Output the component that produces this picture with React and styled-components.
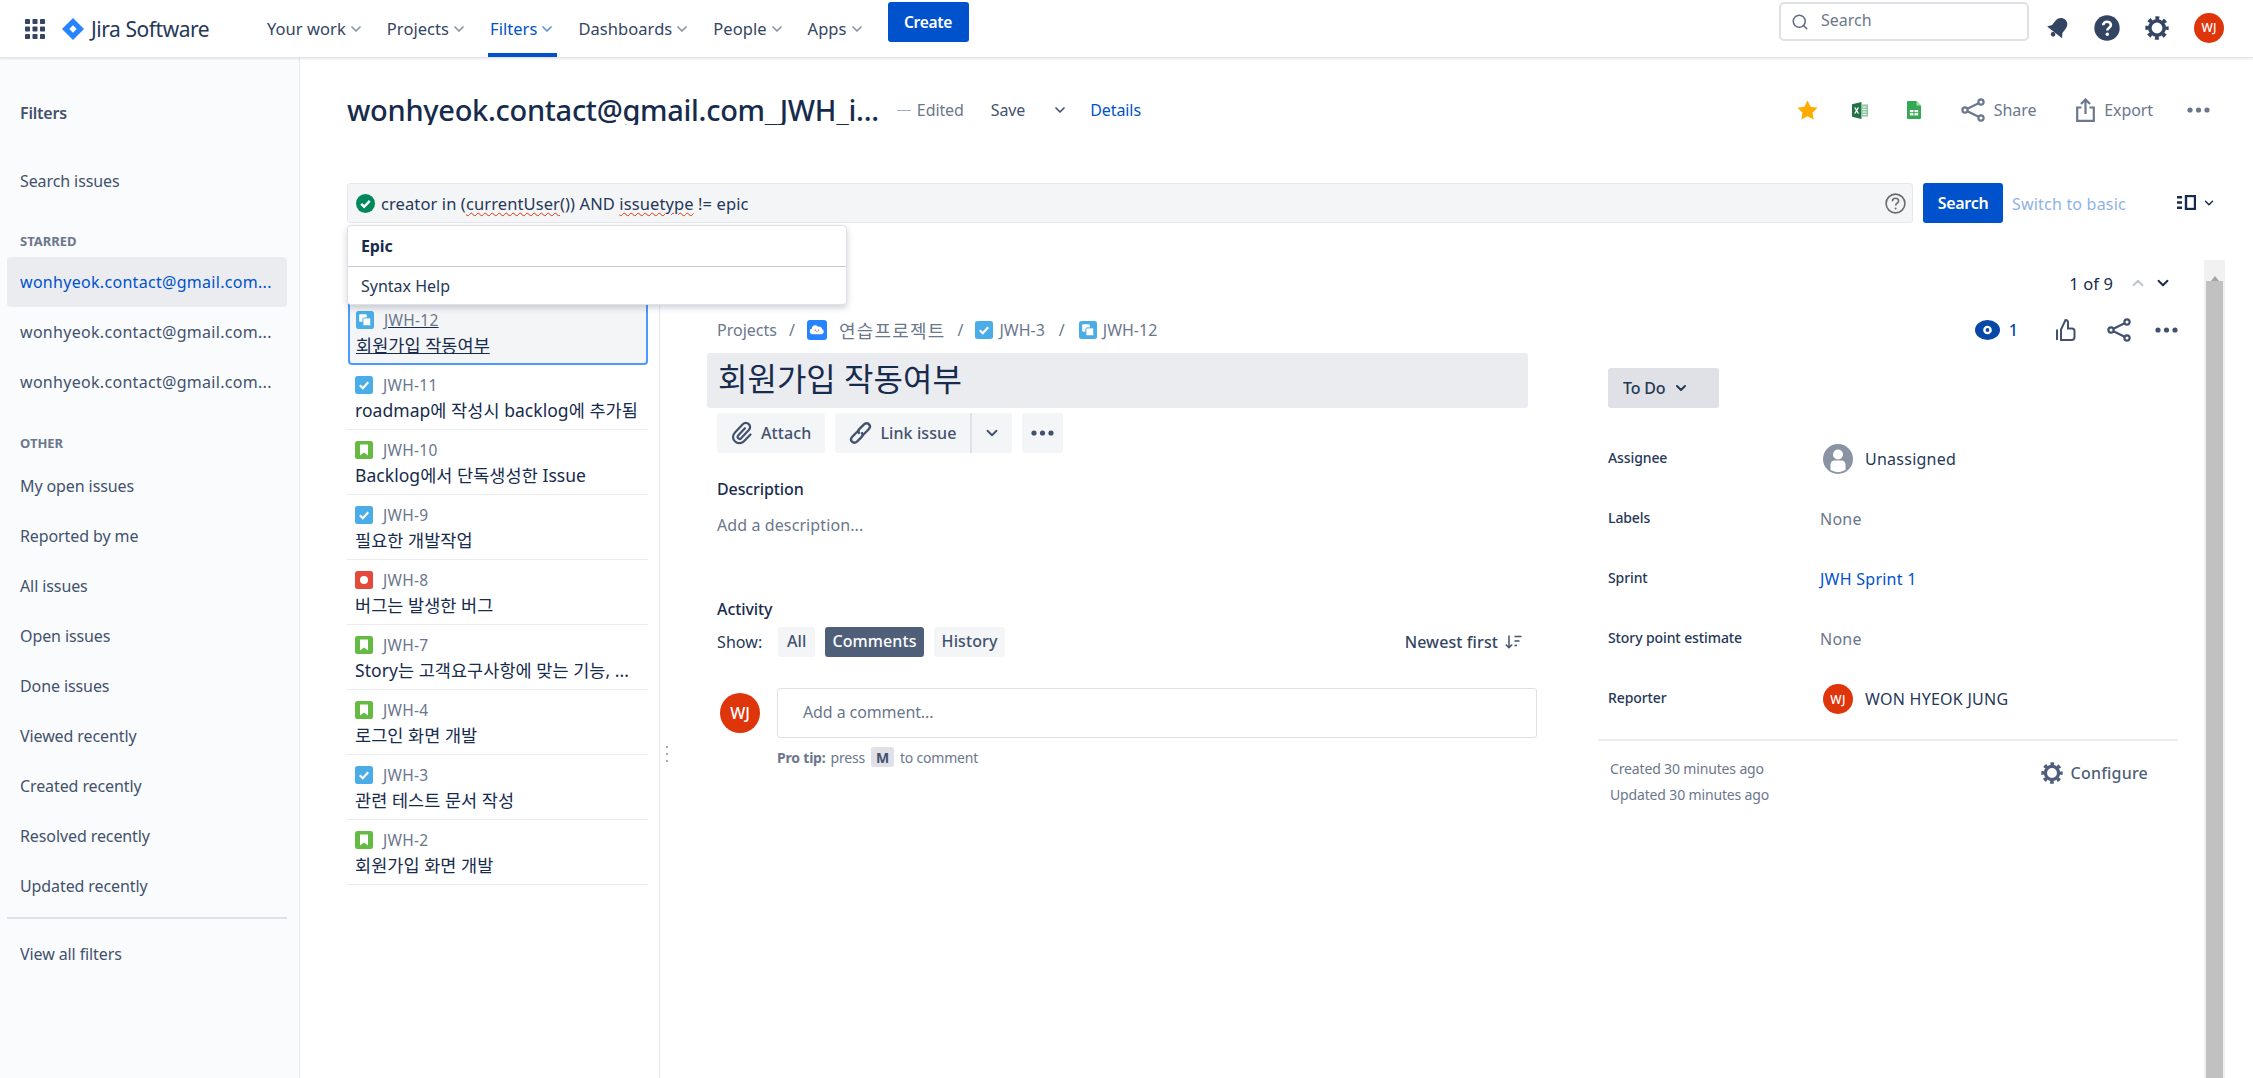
import React from "react";
import styled, { createGlobalStyle } from "styled-components";
import { Search as SearchGlyph, ChevronDown, ChevronUp } from "lucide-react";

const GlobalStyle = createGlobalStyle`
  html, body { margin: 0; padding: 0; height: 100%; background: #fff; overflow: hidden; }
  body { font-family: "Noto Sans", "Noto Sans CJK KR", sans-serif; color: #172B4D; font-size: 15px; }
  #root { height: 100%; }
  * { box-sizing: border-box; }
`;

const Page = styled.div`
  width: 2253px;
  height: 1078px;
  display: flex;
  flex-direction: column;
  overflow: hidden;
`;
const Gap = styled.span`
  width: ${(p) => p.$w}px;
  flex: none;
`;

/* top bar */
const Header = styled.header`
  height: 58px;
  flex: none;
  display: flex;
  align-items: stretch;
  padding: 0 29px 0 25px;
  border-bottom: 1px solid #E2E4E9;
  box-shadow: 0 1px 2px rgba(9, 30, 66, 0.1);
  position: relative;
  z-index: 2;
  background: #fff;
`;
const Brand = styled.div`
  display: flex;
  align-items: center;
  width: 240px;
  flex: none;
`;
const BrandName = styled.span`
  font-size: 21px;
  color: #253858;
  margin-left: 7px;
  letter-spacing: -0.45px;
  white-space: nowrap;
`;
const Nav = styled.nav`
  display: flex;
  gap: 19px;
`;
const NavItem = styled.div`
  height: 57px;
  display: flex;
  align-items: center;
  gap: 2px;
  padding: 4px 2px 0;
  font-size: 16.5px;
  letter-spacing: 0.05px;
  white-space: nowrap;
  color: ${(p) => (p.$active ? "#0052CC" : "#344563")};
  border-bottom: 4px solid ${(p) => (p.$active ? "#0052CC" : "transparent")};
  svg { color: ${(p) => (p.$active ? "#5E8FDB" : "#8993A4")}; }
`;
const CreateButton = styled.button`
  height: 40px;
  width: 81px;
  align-self: flex-start;
  margin: 2px 0 0 21px;
  border: 0;
  border-radius: 3px;
  background: #0052CC;
  color: #fff;
  font: 600 15.5px "Noto Sans", sans-serif;
  letter-spacing: -0.3px;
`;
const Spacer = styled.div`
  flex: 1;
`;
const TopSearch = styled.div`
  width: 250px;
  height: 39px;
  margin-top: 2px;
  border: 2px solid #DFE1E6;
  border-radius: 5px;
  display: flex;
  align-items: center;
  gap: 12px;
  padding: 0 10px 4px;
  font-size: 16px;
  color: #6B778C;
  svg { color: #5E6C84; margin-top: 4px; }
`;
const HeaderIcons = styled.div`
  display: flex;
  align-items: center;
  gap: 25px;
  margin-left: 18px;
  padding-bottom: 2px;
`;
const Avatar = styled.div`
  width: ${(p) => p.$size}px;
  height: ${(p) => p.$size}px;
  border-radius: 50%;
  background: #DE350B;
  color: #fff;
  flex: none;
  display: flex;
  align-items: center;
  justify-content: center;
  font-size: ${(p) => Math.round(p.$size * 0.4)}px;
  font-weight: 500;
`;

/* layout */
const Body = styled.div`
  flex: 1;
  display: flex;
  min-height: 0;
`;
const Sidebar = styled.aside`
  width: 300px;
  flex: none;
  background: #FAFBFC;
  border-right: 1px solid #E6E8EC;
  padding: 43px 12px 0 7px;
`;
const SideTitle = styled.div`
  height: 24px;
  line-height: 24px;
  padding-left: 13px;
  font-size: 16px;
  font-weight: 600;
  color: #42526E;
  letter-spacing: -0.2px;
`;
const SideItem = styled.div`
  height: 50px;
  line-height: 50px;
  padding: 0 13px;
  border-radius: 4px;
  font-size: 16px;
  white-space: nowrap;
  letter-spacing: -0.1px;
  margin-top: ${(p) => p.$top || 0}px;
  color: ${(p) => (p.$active ? "#0052CC" : "#42526E")};
  background: ${(p) => (p.$active ? "#EBECF0" : "transparent")};
`;
const StarredItem = styled(SideItem)`
  letter-spacing: 0.3px;
`;
const SideHeading = styled.div`
  height: 16px;
  line-height: 16px;
  padding-left: 13px;
  font-size: 13px;
  font-weight: 700;
  color: #6B778C;
  margin: ${(p) => p.$top}px 0 ${(p) => p.$bottom}px;
`;
const SideRule = styled.div`
  height: 2px;
  background: #DFE1E6;
  margin: 6px 0 10px;
`;

const Main = styled.main`
  flex: 1;
  min-width: 0;
  display: flex;
  flex-direction: column;
`;
const TitleRow = styled.div`
  height: 125px;
  flex: none;
  display: flex;
  align-items: flex-start;
  padding: 33px 43px 0 47px;
`;
const FilterTitle = styled.h1`
  margin: 0;
  font-size: 29px;
  font-weight: 500;
  line-height: 38px;
  height: 34px;
  overflow: hidden;
  color: #172B4D;
  letter-spacing: -0.3px;
  white-space: nowrap;
`;
const TitleMeta = styled.div`
  display: flex;
  align-items: center;
  height: 38px;
  margin-left: 18px;
  font-size: 16px;
  color: #6B778C;
  letter-spacing: -0.1px;
`;
const EditedDash = styled.span`
  width: 14px;
  height: 1px;
  background: #A5ADBA;
  margin-right: 6px;
`;
const SaveLabel = styled.span`
  margin: 0 27px 0 27px;
  color: #42526E;
`;
const DetailsLink = styled.span`
  color: #0052CC;
  margin-left: 22px;
`;
const TitleActions = styled.div`
  margin-left: auto;
  display: flex;
  align-items: center;
  height: 38px;
  font-size: 16px;
  color: #6B778C;
`;
const ActionLabel = styled.span`
  margin-left: 9px;
  letter-spacing: -0.1px;
`;

const JqlRow = styled.div`
  height: 41px;
  flex: none;
  display: flex;
  align-items: stretch;
  padding: 0 37px 0 47px;
  position: relative;
`;
const JqlBox = styled.div`
  width: 1566px;
  height: 40px;
  background: #F4F5F7;
  border: 1px solid #E6E8EC;
  border-radius: 3px;
  display: flex;
  align-items: center;
  padding: 0 6px 0 8px;
  font-size: 16.5px;
  letter-spacing: 0.1px;
  color: #253858;
  gap: 6px;
`;
const Squiggle = styled.span`
  text-decoration: underline wavy #DE350B 1.2px;
  text-underline-offset: 2px;
`;
const JqlHelp = styled.span`
  margin-left: auto;
  display: flex;
`;
const SearchButton = styled.button`
  width: 80px;
  height: 40px;
  margin-left: 10px;
  background: #0052CC;
  color: #fff;
  border: 0;
  border-radius: 3px;
  font: 600 16px "Noto Sans", sans-serif;
  letter-spacing: -0.3px;
`;
const SwitchLink = styled.span`
  margin-left: 9px;
  align-self: center;
  color: #8FB1E8;
  font-size: 16px;
  letter-spacing: 0.2px;
`;
const ViewToggle = styled.div`
  margin-left: auto;
  align-self: flex-start;
  padding-top: 12px;
  display: flex;
  align-items: center;
  gap: 6px;
`;
const Suggestions = styled.div`
  position: absolute;
  left: 47px;
  top: 42px;
  width: 500px;
  height: 80px;
  background: #fff;
  border: 1px solid #DFE1E6;
  border-radius: 4px;
  box-shadow: 0 3px 6px rgba(9, 30, 66, 0.2);
  z-index: 3;
`;
const SuggestionHead = styled.div`
  height: 41px;
  line-height: 40px;
  padding-left: 13px;
  font-weight: 700;
  font-size: 16px;
  letter-spacing: -0.1px;
  border-bottom: 1px solid #C9CBD0;
`;
const SuggestionItem = styled.div`
  height: 38px;
  line-height: 38px;
  padding-left: 13px;
  font-size: 16px;
  letter-spacing: 0;
  color: #253858;
`;

const Content = styled.div`
  flex: 1;
  min-height: 0;
  display: flex;
  margin-top: 36px;
  padding-right: 29px;
`;
const ListColumn = styled.div`
  width: 360px;
  flex: none;
  padding: 39px 11px 0 47px;
  border-right: 1px solid #E6E8EC;
  position: relative;
`;
const IssueCard = styled.div`
  height: 65px;
  padding: 6px 7px 0 8px;
  border-bottom: 1px solid #EBECF0;
  ${(p) => p.$selected && `
    height: 66px;
    padding: 5px 6px 0 6px;
    background: #F4F5F7;
    border: 2px solid #4C9AFF;
    border-radius: 4px;
    margin-left: 1px;
    text-decoration: underline;
  `}
`;
const IssueKeyRow = styled.div`
  display: flex;
  align-items: center;
  gap: 10px;
  height: 26px;
  margin-top: 1px;
  margin-bottom: -1px;
  font-size: 15.5px;
  letter-spacing: 0.3px;
  color: #6B778C;
`;
const IssueName = styled.div`
  font-size: 17.5px;
  line-height: 26px;
  letter-spacing: 0.05px;
  color: #172B4D;
  white-space: nowrap;
  overflow: hidden;
`;
const DragDots = styled.div`
  position: absolute;
  left: 365px;
  top: 486px;
  width: 4px;
  height: 16px;
  display: flex;
  flex-direction: column;
  justify-content: space-between;
  i { width: 2px; height: 2px; margin: 0 auto; background: #A5ADBA; display: block; }
`;

const Detail = styled.div`
  width: 1544px;
  flex: none;
  padding: 3px 26px 0 47px;
  display: flex;
  flex-direction: column;
`;
const Pager = styled.div`
  height: 40px;
  display: flex;
  align-items: center;
  justify-content: flex-end;
  gap: 7px;
  padding-right: 6px;
  font-size: 16.5px;
  letter-spacing: 0.1px;
`;
const PagerCount = styled.span`
  margin-right: 9px;
`;
const Columns = styled.div`
  display: flex;
  gap: 61px;
`;
const LeftPane = styled.div`
  width: 830px;
  flex: none;
  padding-top: 17px;
`;
const RightPane = styled.div`
  width: 580px;
  flex: none;
`;
const Breadcrumbs = styled.div`
  height: 20px;
  display: flex;
  align-items: center;
  padding-left: 10px;
  font-size: 16px;
  letter-spacing: 0;
  color: #6B778C;
  white-space: nowrap;
`;
const ProjectName = styled.span`
  font-size: 18px;
  letter-spacing: 1.2px;
`;
const Slash = styled.span`
  margin: 0 ${(p) => p.$m || 12}px;
`;
const CrumbIcon = styled.span`
  display: flex;
  margin-right: ${(p) => p.$gap}px;
`;
const SummaryBox = styled.div`
  width: 821px;
  height: 55px;
  margin-top: 13px;
  background: #EBECF0;
  border-radius: 3px;
  padding-left: 11px;
  line-height: 51px;
  font-size: 32px;
  color: #172B4D;
`;
const ButtonRow = styled.div`
  display: flex;
  margin: 5px 0 0 10px;
  gap: 10px;
`;
const ToolButton = styled.button`
  height: 40px;
  border: 0;
  border-radius: 3px;
  background: #F4F5F7;
  color: #42526E;
  padding: 0 ${(p) => p.$pad ?? 14}px;
  display: flex;
  align-items: center;
  gap: 8px;
  font: 500 16px "Noto Sans", sans-serif;
  letter-spacing: 0.1px;
`;
const SplitButton = styled(ToolButton)`
  border-right: 2px solid #DFE1E6;
  border-radius: 3px 0 0 3px;
`;
const SplitPair = styled.div`
  display: flex;
`;
const SplitChevron = styled(ToolButton)`
  width: 40px;
  justify-content: center;
  padding: 0;
  border-radius: 0 3px 3px 0;
`;
const SectionLabel = styled.div`
  margin: ${(p) => p.$top}px 0 0 10px;
  font-size: 16px;
  line-height: 24px;
  font-weight: 500;
  letter-spacing: -0.1px;
`;
const Placeholder = styled.div`
  margin: 12px 0 0 10px;
  font-size: 16px;
  line-height: 24px;
  letter-spacing: 0.1px;
  color: #6B778C;
`;
const ShowRow = styled.div`
  display: flex;
  align-items: center;
  height: 30px;
  margin: 6px 15px 0 10px;
  font-size: 16px;
  letter-spacing: 0.1px;
`;
const ShowLabel = styled.span`
  width: 61px;
  color: #253858;
`;
const ShowTab = styled.span`
  height: 30px;
  line-height: 29px;
  padding: 0 ${(p) => p.$pad}px;
  margin-right: 10px;
  border-radius: 3px;
  font-weight: 500;
  background: ${(p) => (p.$active ? "#505F79" : "#F4F5F7")};
  color: ${(p) => (p.$active ? "#fff" : "#42526E")};
`;
const SortLabel = styled.span`
  margin-left: auto;
  color: #344563;
  display: flex;
  align-items: center;
  gap: 7px;
  font-weight: 500;
`;
const CommentRow = styled.div`
  display: flex;
  margin-top: 31px;
  padding-left: 13px;
`;
const CommentAvatarSlot = styled.div`
  width: 57px;
  padding-top: 5px;
`;
const CommentInput = styled.div`
  width: 760px;
  height: 50px;
  border: 1px solid #DFE1E6;
  border-radius: 3px;
  line-height: 46px;
  padding-left: 25px;
  font-size: 16px;
  letter-spacing: -0.1px;
  color: #6B778C;
`;
const ProTip = styled.div`
  margin: 9px 0 0 70px;
  display: flex;
  align-items: center;
  font-size: 14px;
  letter-spacing: -0.2px;
  color: #6B778C;
  b { font-weight: 700; margin-right: 5px; }
`;
const KeyCap = styled.span`
  background: #DFE1E6;
  border-radius: 3px;
  width: 23px;
  height: 20px;
  margin: 0 6px;
  display: flex;
  align-items: center;
  justify-content: center;
  font-weight: 700;
  color: #42526E;
`;

const IssueActions = styled.div`
  height: 20px;
  margin-top: 17px;
  display: flex;
  align-items: center;
  justify-content: flex-end;
  color: #42526E;
`;
const WatchCount = styled.span`
  color: #0747A6;
  font-size: 16px;
  margin: 0 38px 0 9px;
  font-weight: 500;
`;
const StatusButton = styled.div`
  width: 111px;
  height: 40px;
  margin: 28px 0 21px 10px;
  background: #DFE1E6;
  border-radius: 3px;
  display: flex;
  align-items: center;
  padding-left: 15px;
  gap: 8px;
  font-size: 16px;
  font-weight: 500;
  letter-spacing: -0.2px;
  color: #253858;
`;
const FieldRow = styled.div`
  height: 60px;
  display: flex;
  align-items: center;
  padding-left: 10px;
`;
const FieldLabel = styled.div`
  width: 212px;
  margin-top: -3px;
  font-size: 14px;
  font-weight: 500;
  letter-spacing: -0.1px;
  color: #253858;
`;
const FieldValue = styled.div`
  display: flex;
  align-items: center;
  gap: 12px;
  font-size: 16px;
  letter-spacing: 0.25px;
  white-space: nowrap;
  padding-left: ${(p) => p.$inset || 0}px;
  color: ${(p) => p.$color || "#253858"};
`;
const FieldsFoot = styled.div`
  margin-top: 10px;
  border-top: 2px solid #EBECF0;
  display: flex;
  justify-content: space-between;
  padding: 17px 30px 0 12px;
`;
const Stamps = styled.div`
  font-size: 14px;
  line-height: 26px;
  margin-top: -2px;
  letter-spacing: -0.15px;
  color: #6B778C;
`;
const ConfigureLink = styled.div`
  display: flex;
  align-items: center;
  gap: 8px;
  height: 30px;
  font-size: 16px;
  font-weight: 500;
  letter-spacing: 0.2px;
  color: #505F79;
`;
const ScrollTrack = styled.div`
  width: 21px;
  flex: none;
  background: #F1F1F1;
  padding: 0 2px;
  display: flex;
  flex-direction: column;
`;
const ScrollArrow = styled.div`
  height: 21px;
  display: flex;
  justify-content: center;
  padding-top: 9px;
  i {
    border-left: 4px solid transparent;
    border-right: 4px solid transparent;
    border-bottom: 5px solid #A3A3A3;
  }
`;
const ScrollThumb = styled.div`
  flex: 1;
  background: #C1C1C1;
`;

/* drawings */
const GridIcon = () => (
  <svg width="20" height="20" viewBox="0 0 20 20" fill="#344563">
    {[0, 7.5, 15].map((y) => [0, 7.5, 15].map((x) => <rect key={`${x}-${y}`} x={x} y={y} width="5" height="5" rx="0.8" />))}
  </svg>
);
const JiraMark = () => (
  <svg width="22" height="22" viewBox="0 0 22 22">
    <path d="M11 0 L22 11 L11 22 L0 11 Z" fill="#2684FF" />
    <path d="M11 7.3 L14.7 11 L11 14.7 L7.3 11 Z" fill="#fff" />
  </svg>
);
const BellIcon = () => (
  <svg width="22" height="24" viewBox="0 0 22 24" fill="#344563">
    <g transform="rotate(38 11 12)">
      <path d="M11 1c-4.2 0-6.5 3.2-6.5 7.2v5L1.500 17.500h19l-3-4.300v-5C17.500 4.200 15.200 1 11 1z" />
      <circle cx="11" cy="20" r="2.3" />
    </g>
  </svg>
);
const HelpIcon = () => (
  <svg width="26" height="26" viewBox="0 0 26 26">
    <circle cx="13" cy="13" r="12.7" fill="#344563" />
    <path d="M9.2 10.2c0-2.2 1.7-3.5 3.8-3.5s3.9 1.3 3.9 3.3c0 2.8-3.6 2.8-3.6 5.6" fill="none" stroke="#fff" strokeWidth="2.6" />
    <circle cx="13.3" cy="19.3" r="1.7" fill="#fff" />
  </svg>
);
const GearIcon = ({ size = 24, color = "#344563" }) => (
  <svg width={size} height={size} viewBox="0 0 24 24" fill="none" stroke={color}>
    <circle cx="12" cy="12" r="7.2" strokeWidth="3.6" />
    <circle cx="12" cy="12" r="10" strokeWidth="3.4" strokeDasharray="4 3.85" strokeDashoffset="2" />
  </svg>
);
const StarIcon = () => (
  <svg width="21" height="20" viewBox="0 0 21 20">
    <path d="M10.5 0.5l3.1 6.3 6.9 1-5 4.9 1.2 6.9-6.2-3.3-6.2 3.3 1.2-6.9-5-4.9 6.9-1z" fill="#FFAB00" />
  </svg>
);
const ExcelIcon = () => (
  <svg width="16" height="17" viewBox="0 0 16 17">
    <path d="M0 2.2L9.5 0v17L0 14.8z" fill="#217346" />
    <rect x="9.5" y="2.5" width="6.5" height="12" fill="#8CC6A0" />
    <path d="M10.5 5h4M10.5 7.5h4M10.5 10h4M10.5 12.5h4" stroke="#fff" />
    <path d="M2.8 5.5l3.6 6M6.4 5.5l-3.6 6" stroke="#fff" strokeWidth="1.4" />
  </svg>
);
const SheetIcon = () => (
  <svg width="14" height="18" viewBox="0 0 14 18">
    <path d="M1 0h8.5L14 4.5V17a1 1 0 0 1-1 1H1a1 1 0 0 1-1-1V1a1 1 0 0 1 1-1z" fill="#34A853" />
    <path d="M9.5 0L14 4.5H9.5z" fill="#A8DAB5" />
    <rect x="2.8" y="9" width="8.4" height="5.4" fill="#fff" />
    <path d="M2.8 11.7h8.4M7 9v5.4" stroke="#34A853" />
  </svg>
);
const ShareIcon = ({ size = 24, color = "#6B778C" }) => (
  <svg width={size} height={size} viewBox="0 0 24 24" fill="none" stroke={color} strokeWidth="2.2">
    <circle cx="20" cy="4" r="2.6" />
    <circle cx="4" cy="12" r="2.6" />
    <circle cx="20" cy="20" r="2.6" />
    <path d="M6.4 10.8l11.2-5.6M6.4 13.2l11.2 5.6" />
  </svg>
);
const ExportIcon = () => (
  <svg width="19" height="24" viewBox="0 0 19 24" fill="none" stroke="#6B778C" strokeWidth="2.2">
    <path d="M5.5 9.5H1.2v13.3h16.6V9.5h-4.3" />
    <path d="M9.5 16V1.8M5 6l4.5-4.5L14 6" />
  </svg>
);
const MoreIcon = ({ color = "#6B778C", width = 23 }) => (
  <svg width={width} height="6" viewBox="0 0 23 6" fill={color}>
    <circle cx="3" cy="3" r="2.6" />
    <circle cx="11.5" cy="3" r="2.6" />
    <circle cx="20" cy="3" r="2.6" />
  </svg>
);
const CheckBadge = () => (
  <svg width="19" height="19" viewBox="0 0 17 17">
    <circle cx="8.5" cy="8.5" r="8.5" fill="#00875A" />
    <path d="M4.6 8.8l2.7 2.6 5-5.2" fill="none" stroke="#fff" strokeWidth="2.2" />
  </svg>
);
const OutlineHelp = () => (
  <svg width="21" height="21" viewBox="0 0 21 21" fill="none" stroke="#6B6B6B" strokeWidth="1.6">
    <circle cx="10.5" cy="10.5" r="9.4" />
    <path d="M7.4 8.2c0-1.8 1.4-2.9 3.1-2.9s3.1 1 3.1 2.7c0 2.2-3 2.2-3 4.6" />
    <circle cx="10.6" cy="15.4" r="1" fill="#6B6B6B" stroke="none" />
  </svg>
);
const ViewIcon = () => (
  <svg width="19" height="15" viewBox="0 0 19 15">
    <path d="M0 1h5v2.6H0zM0 6.2h5v2.6H0zM0 11.4h5V14H0z" fill="#172B4D" />
    <rect x="9" y="1" width="9" height="13" fill="none" stroke="#172B4D" strokeWidth="2.4" />
  </svg>
);
const IssueIcon = ({ kind, size = 18 }) => {
  const fill = { task: "#4BADE8", subtask: "#4BADE8", story: "#65BA43", bug: "#E5493A" }[kind];
  return (
    <svg width={size} height={size} viewBox="0 0 18 18">
      <rect width="18" height="18" rx="2.5" fill={fill} />
      {kind === "task" && <path d="M4.8 9.3l3 2.9 5.4-6" fill="none" stroke="#fff" strokeWidth="2.2" />}
      {kind === "bug" && <circle cx="9" cy="9" r="4" fill="#fff" />}
      {kind === "story" && <path d="M5 3.6h8v11L9 11.4l-4 3.2z" fill="#fff" />}
      {kind === "subtask" && (
        <g fill="#fff">
          <rect x="3.2" y="3.2" width="7.6" height="7.6" rx="1.2" />
          <rect x="6.9" y="6.9" width="7.9" height="7.9" rx="1.2" stroke={fill} strokeWidth="1" />
        </g>
      )}
    </svg>
  );
};
const ProjectIcon = () => (
  <svg width="20" height="20" viewBox="0 0 20 20">
    <rect width="20" height="20" rx="3" fill="#2684FF" />
    <path d="M5.3 14.2a2.9 2.9 0 0 1-.4-5.7 3.5 3.5 0 0 1 3.4-3.3c1.2 0 2.2.6 2.8 1.5a3 3 0 0 1 4 2.5 2.6 2.6 0 0 1-.6 5z" fill="#fff" />
    <circle cx="8.3" cy="10.2" r=".6" fill="#DE350B" />
    <circle cx="11.7" cy="10.2" r=".6" fill="#DE350B" />
    <path d="M9 11.3h2l-1 1z" fill="#DE350B" />
  </svg>
);
const PaperclipIcon = () => (
  <svg width="22" height="24" viewBox="0 0 22 24" fill="none" stroke="#42526E" strokeWidth="2.2" strokeLinecap="round">
    <path d="M8.5 22c-3 .5-6.5-2.5-6.5-6 0-1.800.8-3.200 2-4.500l7.500-8c2-2 4.500-2 6.300-.4 1.800 1.700 1.700 4.200-.2 6.200l-7.300 7.800c-1 1-2.300 1-3.100.2s-.8-2 .2-3.100l6.500-7" />
    <path d="M8.5 22c2 .2 3.500-.6 5-2.200l6-6.300" />
  </svg>
);
const LinkIcon = () => (
  <svg width="23" height="22" viewBox="0 0 23 22" fill="none" stroke="#42526E" strokeWidth="2.4" strokeLinecap="round">
    <path d="M9.5 8.5l-6 6c-2 2-1.800 3.800-.5 5.100s3.200 1.400 5 0l4.500-4.500c1.500-1.500 1.300-3 .5-4" />
    <path d="M13.5 13.5l6-6c2-2 1.800-3.800.5-5.100s-3.200-1.400-5 0l-4.500 4.500c-1.500 1.500-1.300 3-.5 4" />
  </svg>
);
const SortIcon = () => (
  <svg width="17" height="14" viewBox="0 0 17 14" fill="none" stroke="#42526E" strokeWidth="1.5">
    <path d="M4 0.5V12.5M0.8 9.5L4 12.7l3.2-3.2" />
    <path d="M9.5 1.5h7M9.5 6h5M9.5 10.5h2.5" />
  </svg>
);
const EyeIcon = () => (
  <svg width="25" height="20" viewBox="0 0 25 20">
    <ellipse cx="12.5" cy="10" rx="12.5" ry="10" fill="#0747A6" />
    <circle cx="12.5" cy="10" r="4.3" fill="#fff" />
    <circle cx="12.5" cy="10" r="1.9" fill="#0747A6" />
  </svg>
);
const ThumbIcon = () => (
  <svg width="20" height="22" viewBox="0 0 20 22" fill="none" stroke="#42526E" strokeWidth="2">
    <path d="M1 10.5V21M5 21h10.5a3 3 0 0 0 3-3v-6a2.5 2.5 0 0 0-2.5-2.5h-4V3.5A2.5 2.5 0 0 0 9.5 1L5 10.5z" />
  </svg>
);
const UserIcon = () => (
  <svg width="30" height="30" viewBox="0 0 30 30">
    <circle cx="15" cy="15" r="15" fill="#8993A4" />
    <circle cx="15" cy="10.5" r="5" fill="#fff" />
    <path d="M7.5 26v-5.500c0-2.500 2-4 4-4h7c2 0 4 1.500 4 4V26a15 15 0 0 1-15 0z" fill="#fff" />
  </svg>
);

const issues = [
  { key: "JWH-11", kind: "task", name: "roadmap에 작성시 backlog에 추가됨" },
  { key: "JWH-10", kind: "story", name: "Backlog에서 단독생성한 Issue" },
  { key: "JWH-9", kind: "task", name: "필요한 개발작업" },
  { key: "JWH-8", kind: "bug", name: "버그는 발생한 버그" },
  { key: "JWH-7", kind: "story", name: "Story는 고객요구사항에 맞는 기능, ..." },
  { key: "JWH-4", kind: "story", name: "로그인 화면 개발" },
  { key: "JWH-3", kind: "task", name: "관련 테스트 문서 작성" },
  { key: "JWH-2", kind: "story", name: "회원가입 화면 개발" },
];
const navItems = ["Your work", "Projects", "Filters", "Dashboards", "People", "Apps"];
const otherFilters = [
  "My open issues", "Reported by me", "All issues", "Open issues", "Done issues",
  "Viewed recently", "Created recently", "Resolved recently", "Updated recently",
];
const starred = "wonhyeok.contact@gmail.com...";

export default function App() {
  return (
    <Page>
      <GlobalStyle />
      <Header>
        <Brand>
          <GridIcon />
          <Gap $w={17} />
          <JiraMark />
          <BrandName>Jira Software</BrandName>
        </Brand>
        <Nav>
          {navItems.map((item) => (
            <NavItem key={item} $active={item === "Filters"}>
              {item}
              <ChevronDown size={16} strokeWidth={2.5} />
            </NavItem>
          ))}
        </Nav>
        <CreateButton>Create</CreateButton>
        <Spacer />
        <TopSearch>
          <SearchGlyph size={18} />
          Search
        </TopSearch>
        <HeaderIcons>
          <BellIcon />
          <HelpIcon />
          <GearIcon />
          <Avatar $size={30}>WJ</Avatar>
        </HeaderIcons>
      </Header>
      <Body>
        <Sidebar>
          <SideTitle>Filters</SideTitle>
          <SideItem $top={31}>Search issues</SideItem>
          <SideHeading $top={27} $bottom={8}>STARRED</SideHeading>
          <StarredItem $active>{starred}</StarredItem>
          <StarredItem>{starred}</StarredItem>
          <StarredItem>{starred}</StarredItem>
          <SideHeading $top={28} $bottom={10}>OTHER</SideHeading>
          {otherFilters.map((f) => <SideItem key={f}>{f}</SideItem>)}
          <SideRule />
          <SideItem>View all filters</SideItem>
        </Sidebar>
        <Main>
          <TitleRow>
            <FilterTitle>wonhyeok.contact@gmail.com_JWH_i...</FilterTitle>
            <TitleMeta>
              <EditedDash />
              Edited
              <SaveLabel>Save</SaveLabel>
              <ChevronDown size={16} strokeWidth={2.5} color="#42526E" />
              <DetailsLink>Details</DetailsLink>
            </TitleMeta>
            <TitleActions>
              <StarIcon />
              <Gap $w={34} />
              <ExcelIcon />
              <Gap $w={39} />
              <SheetIcon />
              <Gap $w={40} />
              <ShareIcon />
              <ActionLabel>Share</ActionLabel>
              <Gap $w={40} />
              <ExportIcon />
              <ActionLabel>Export</ActionLabel>
              <Gap $w={34} />
              <MoreIcon />
            </TitleActions>
          </TitleRow>
          <JqlRow>
            <JqlBox>
              <CheckBadge />
              <span>
                creator in (<Squiggle>currentUser</Squiggle>()) AND <Squiggle>issuetype</Squiggle> != epic
              </span>
              <JqlHelp><OutlineHelp /></JqlHelp>
            </JqlBox>
            <SearchButton>Search</SearchButton>
            <SwitchLink>Switch to basic</SwitchLink>
            <ViewToggle>
              <ViewIcon />
              <ChevronDown size={14} strokeWidth={2.5} color="#172B4D" />
            </ViewToggle>
            <Suggestions>
              <SuggestionHead>Epic</SuggestionHead>
              <SuggestionItem>Syntax Help</SuggestionItem>
            </Suggestions>
          </JqlRow>
          <Content>
            <ListColumn>
              <IssueCard $selected>
                <IssueKeyRow><IssueIcon kind="subtask" />JWH-12</IssueKeyRow>
                <IssueName>회원가입 작동여부</IssueName>
              </IssueCard>
              {issues.map((it) => (
                <IssueCard key={it.key}>
                  <IssueKeyRow><IssueIcon kind={it.kind} />{it.key}</IssueKeyRow>
                  <IssueName>{it.name}</IssueName>
                </IssueCard>
              ))}
              <DragDots><i /><i /><i /></DragDots>
            </ListColumn>
            <Detail>
              <Pager>
                <PagerCount>1 of 9</PagerCount>
                <ChevronUp size={18} strokeWidth={2.5} color="#C1C7D0" />
                <ChevronDown size={18} strokeWidth={2.5} color="#172B4D" />
              </Pager>
              <Columns>
                <LeftPane>
                  <Breadcrumbs>
                    Projects<Slash>/</Slash>
                    <CrumbIcon $gap={12}><ProjectIcon /></CrumbIcon>
                    <ProjectName>연습프로젝트</ProjectName><Slash>/</Slash>
                    <CrumbIcon $gap={6}><IssueIcon kind="task" /></CrumbIcon>
                    JWH-3<Slash $m={14}>/</Slash>
                    <CrumbIcon $gap={6}><IssueIcon kind="subtask" /></CrumbIcon>
                    JWH-12
                  </Breadcrumbs>
                  <SummaryBox>회원가입 작동여부</SummaryBox>
                  <ButtonRow>
                    <ToolButton><PaperclipIcon />Attach</ToolButton>
                    <SplitPair>
                      <SplitButton><LinkIcon />Link issue</SplitButton>
                      <SplitChevron><ChevronDown size={18} strokeWidth={2.5} /></SplitChevron>
                    </SplitPair>
                    <ToolButton $pad={9}><MoreIcon color="#42526E" /></ToolButton>
                  </ButtonRow>
                  <SectionLabel $top={24}>Description</SectionLabel>
                  <Placeholder>Add a description...</Placeholder>
                  <SectionLabel $top={60}>Activity</SectionLabel>
                  <ShowRow>
                    <ShowLabel>Show:</ShowLabel>
                    <ShowTab $pad={9}>All</ShowTab>
                    <ShowTab $pad={7} $active>Comments</ShowTab>
                    <ShowTab $pad={8}>History</ShowTab>
                    <SortLabel>Newest first<SortIcon /></SortLabel>
                  </ShowRow>
                  <CommentRow>
                    <CommentAvatarSlot><Avatar $size={40}>WJ</Avatar></CommentAvatarSlot>
                    <CommentInput>Add a comment...</CommentInput>
                  </CommentRow>
                  <ProTip><b>Pro tip:</b>press<KeyCap>M</KeyCap>to comment</ProTip>
                </LeftPane>
                <RightPane>
                  <IssueActions>
                    <EyeIcon />
                    <WatchCount>1</WatchCount>
                    <ThumbIcon />
                    <Gap $w={31} />
                    <ShareIcon color="#42526E" />
                    <Gap $w={24} />
                    <MoreIcon color="#42526E" />
                  </IssueActions>
                  <StatusButton>To Do<ChevronDown size={16} strokeWidth={3} /></StatusButton>
                  <FieldRow>
                    <FieldLabel>Assignee</FieldLabel>
                    <FieldValue $inset={3}><UserIcon />Unassigned</FieldValue>
                  </FieldRow>
                  <FieldRow>
                    <FieldLabel>Labels</FieldLabel>
                    <FieldValue $color="#6B778C">None</FieldValue>
                  </FieldRow>
                  <FieldRow>
                    <FieldLabel>Sprint</FieldLabel>
                    <FieldValue $color="#0052CC">JWH Sprint 1</FieldValue>
                  </FieldRow>
                  <FieldRow>
                    <FieldLabel>Story point estimate</FieldLabel>
                    <FieldValue $color="#6B778C">None</FieldValue>
                  </FieldRow>
                  <FieldRow>
                    <FieldLabel>Reporter</FieldLabel>
                    <FieldValue $inset={3}><Avatar $size={30}>WJ</Avatar>WON HYEOK JUNG</FieldValue>
                  </FieldRow>
                  <FieldsFoot>
                    <Stamps>Created 30 minutes ago<br />Updated 30 minutes ago</Stamps>
                    <ConfigureLink><GearIcon size={22} color="#505F79" />Configure</ConfigureLink>
                  </FieldsFoot>
                </RightPane>
              </Columns>
            </Detail>
            <ScrollTrack>
              <ScrollArrow><i /></ScrollArrow>
              <ScrollThumb />
            </ScrollTrack>
          </Content>
        </Main>
      </Body>
    </Page>
  );
}
